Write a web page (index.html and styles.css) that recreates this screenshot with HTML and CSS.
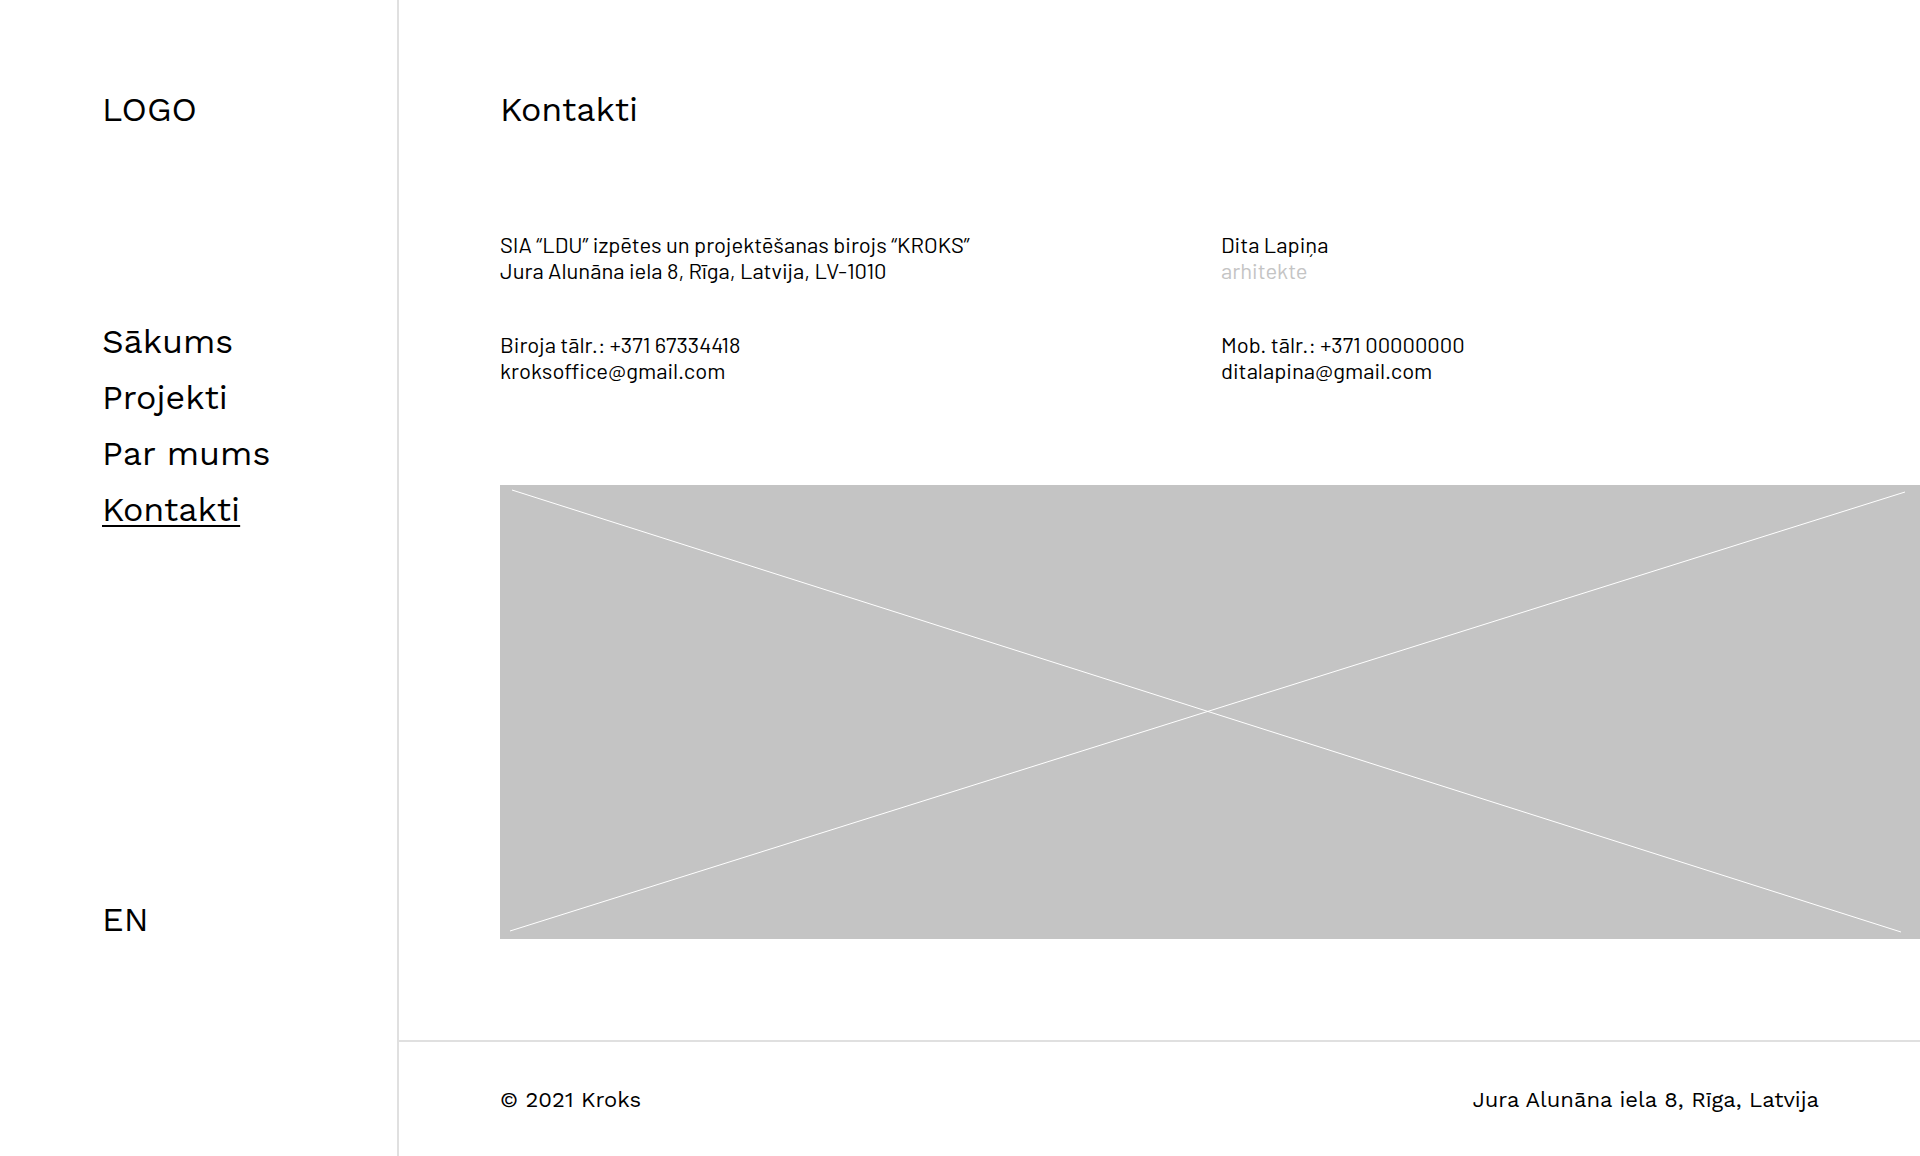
FILE: index.html
```html
<!DOCTYPE html>
<html lang="lv">
<head>
<meta charset="utf-8">
<title>Kontakti</title>
<link rel="stylesheet" href="styles.css">
</head>
<body>
<div class="page">
  <header class="sidebar">
    <a class="link" href="#">LOGO</a>
    <nav class="menu" aria-label="Galvenā izvēlne">
      <a class="link" href="#">Sākums</a>
      <a class="link" href="#">Projekti</a>
      <a class="link" href="#">Par mums</a>
      <a class="link current" href="#" aria-current="page">Kontakti</a>
    </nav>
    <a class="link language" href="#">EN</a>
  </header>
  <div class="content">
    <main class="main">
      <h1 class="title">Kontakti</h1>
      <div class="contacts">
        <address class="contact">
          <p>SIA “LDU” izpētes un projektēšanas birojs “KROKS”<br>Jura Alunāna iela 8, Rīga, Latvija, LV-1010</p>
          <p>Biroja tālr.: +371 67334418<br>kroksoffice@gmail.com</p>
        </address>
        <address class="contact">
          <p>Dita Lapiņa<br><span class="role">arhitekte</span></p>
          <p>Mob. tālr.: +371 00000000<br>ditalapina@gmail.com</p>
        </address>
      </div>
      <svg class="picture" viewBox="0 0 1420 454" preserveAspectRatio="none" aria-hidden="true">
        <path d="M12 5 1401 447M10 446 1405 7"/>
      </svg>
    </main>
    <footer class="footer">
      <span>© 2021 Kroks</span>
      <span>Jura Alunāna iela 8, Rīga, Latvija</span>
    </footer>
  </div>
</div>
</body>
</html>
```
FILE: styles.css
```css
* { box-sizing: border-box; }
body {
  margin: 0;
  background: #fff;
  color: #000;
  font-family: "Work Sans", Inter, sans-serif;
}
p { margin: 0; }
.page {
  display: grid;
  grid-template-columns: 399px 1fr;
  min-height: 100vh;
}
.sidebar {
  display: flex;
  flex-direction: column;
  align-items: flex-start;
  padding: 89px 102px 217px;
  border-right: 2px solid #e0e0e0;
}
.link {
  color: inherit;
  font-size: 34px;
  line-height: 40px;
  text-decoration: none;
}
.menu {
  display: flex;
  flex-direction: column;
  align-items: flex-start;
  gap: 16px;
  margin-top: 192px;
}
.current {
  text-decoration: underline;
  text-decoration-thickness: 2px;
  text-underline-offset: 4px;
}
.language { margin-top: auto; }
.content {
  display: flex;
  flex-direction: column;
}
.main {
  display: flex;
  flex: 1;
  flex-direction: column;
  padding: 89px 0 101px 101px;
}
.title {
  margin: 0 0 102px;
  font-size: 34px;
  font-weight: 400;
  line-height: 40px;
}
.contacts {
  display: grid;
  grid-template-columns: 721px 1fr;
  margin-bottom: 102px;
}
.contact {
  display: flex;
  flex-direction: column;
  gap: 48px;
  font-family: Barlow, Roboto, sans-serif;
  font-size: 22px;
  font-style: normal;
  line-height: 26px;
}
.role { color: #c4c4c4; }
.picture {
  display: block;
  flex: 1;
  width: 100%;
  min-height: 0;
  background: #c4c4c4;
  fill: none;
  stroke: #fff;
}
.footer {
  display: flex;
  justify-content: space-between;
  padding: 45px 101px 43px;
  border-top: 2px solid #e0e0e0;
  font-size: 22px;
  line-height: 26px;
}
```
